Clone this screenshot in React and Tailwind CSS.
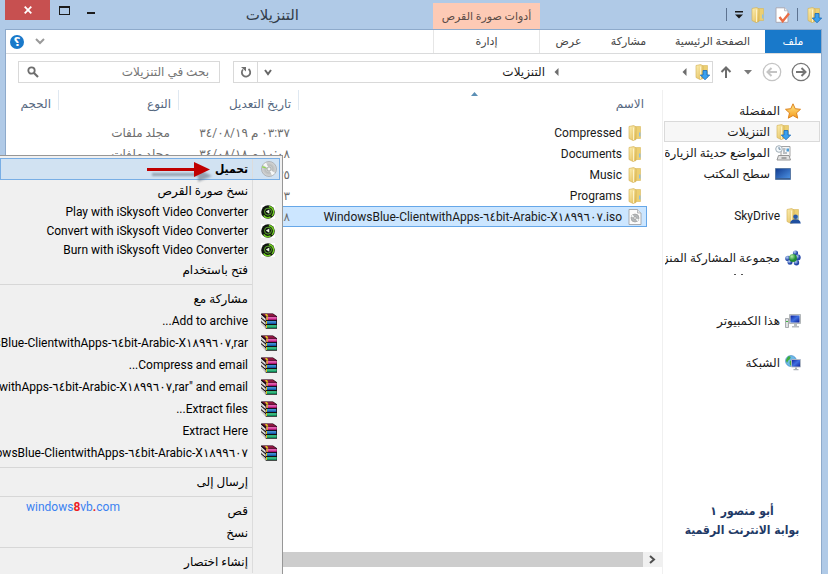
import React from "react";

function Defs() {
  return (
    <svg width="0" height="0" className="absolute" aria-hidden="true">
      <defs>
        <linearGradient id="fold" x1="0" x2="1" y1="0" y2="1">
          <stop offset="0" stopColor="#fdf0b4" />
          <stop offset="1" stopColor="#e0b953" />
        </linearGradient>
        <linearGradient id="screen" x1="0" x2="1" y1="0" y2="1">
          <stop offset="0" stopColor="#0c1f9c" />
          <stop offset="0.5" stopColor="#3f6fe0" />
          <stop offset="1" stopColor="#0a1c96" />
        </linearGradient>
        <linearGradient id="desk" x1="0" x2="1" y1="0" y2="1">
          <stop offset="0" stopColor="#123a8e" />
          <stop offset="1" stopColor="#4f97e8" />
        </linearGradient>
        <linearGradient id="star" x1="0" x2="0" y1="0" y2="1">
          <stop offset="0" stopColor="#ffe98a" />
          <stop offset="1" stopColor="#f59a1c" />
        </linearGradient>
        <radialGradient id="disc">
          <stop offset="0" stopColor="#ffffff" />
          <stop offset="0.5" stopColor="#b9bcbc" />
          <stop offset="1" stopColor="#d9dada" />
        </radialGradient>
        <radialGradient id="ball" cx="0.35" cy="0.3">
          <stop offset="0" stopColor="#b9d2f5" />
          <stop offset="1" stopColor="#2447a8" />
        </radialGradient>
        <radialGradient id="ballg" cx="0.35" cy="0.3">
          <stop offset="0" stopColor="#b8f0a8" />
          <stop offset="1" stopColor="#1f8c34" />
        </radialGradient>
        <filter id="soft" x="-10%" y="-30%" width="120%" height="160%">
          <feGaussianBlur stdDeviation="1.2" />
        </filter>
      </defs>
    </svg>
  );
}

function Svg({ size = 16, children }) {
  return (
    <svg width={size} height={size} viewBox="0 0 16 16" className="shrink-0" aria-hidden="true">
      {children}
    </svg>
  );
}

const folderShape = (
  <>
    <path d="M8.500 1.500h5v12h-5z" fill="#eccf72" stroke="#d9b85c" strokeWidth=".6" />
    <path d="M12 7.500h1.500v4H12z" fill="#8fc0e0" />
    <path d="M2 1.500 L6.800 .5 L9 2 V14.500 L6 15.500 L2 13.500z" fill="url(#fold)" stroke="#d2ac4c" strokeWidth=".6" />
    <path d="M6.600 2.500V15" stroke="#fff6cf" strokeWidth="1" />
  </>
);

const Folder = () => <Svg>{folderShape}</Svg>;

const Downloads = () => (
  <Svg>
    {folderShape}
    <path d="M9 6.500h4v4.500h2.700L11 15.800 6.300 11H9z" fill="#3aa0ee" stroke="#1668b8" strokeWidth=".8" />
  </Svg>
);

const SkyDriveIcon = () => (
  <Svg>
    {folderShape}
    <circle cx="10.500" cy="8.800" r="2.300" fill="#2a5aa8" />
    <path d="M5 15.500c.5-3 2.500-4.300 5.500-4.300s4.800 1.300 5.300 4.300z" fill="#1f4f9f" />
  </Svg>
);

const Star = () => (
  <Svg>
    <path d="M8 .8l2.200 4.900 5.300.6-4 3.600 1.200 5.300L8 12.500l-4.700 2.700 1.200-5.300-4-3.600 5.300-.6z" fill="url(#star)" stroke="#dd8420" strokeWidth="1" strokeLinejoin="round" />
  </Svg>
);

const Recent = () => (
  <Svg>
    <path d="M6 1.500h9v10H6z" fill="#f8f8f8" stroke="#9a9a9a" strokeWidth=".9" />
    <path d="M8 4h2.500M8 6h2M8 8h4" stroke="#6f7a85" strokeWidth=".9" />
    <path d="M11.500 3.500h2.500v3h-2.500z" fill="#4f9fd8" />
    <path d="M3.500 10.500h10.500l1.500 4.500H2z" fill="#e2e2e2" stroke="#8d8d8d" strokeWidth=".9" />
    <path d="M6.500 13h5" stroke="#666" />
    <circle cx="4" cy="4" r="3.300" fill="#f5fafd" stroke="#9aa6b0" strokeWidth=".9" />
    <path d="M4 2v2.200h1.700" fill="none" stroke="#4d6f8c" strokeWidth=".8" />
  </Svg>
);

const Desktop = () => (
  <Svg>
    <path d="M.5 2.500h15v11H.5z" fill="url(#desk)" stroke="#5b7ba6" />
    <path d="M1 12.500h14" stroke="#3a5f92" />
  </Svg>
);

const HomeGroup = () => (
  <Svg>
    <circle cx="10.500" cy="3" r="2.600" fill="url(#ball)" />
    <circle cx="3" cy="8.500" r="2.800" fill="url(#ball)" />
    <circle cx="12.800" cy="7.500" r="2.900" fill="url(#ball)" />
    <circle cx="5" cy="12.300" r="2.500" fill="url(#ball)" />
    <circle cx="11.500" cy="12.800" r="2.700" fill="url(#ball)" />
    <circle cx="8" cy="8" r="3.900" fill="url(#ballg)" />
  </Svg>
);

const Computer = () => (
  <Svg>
    <path d="M4.500 1.500h11v9h-11z" fill="#d9dcde" stroke="#a4a8ab" strokeWidth=".8" />
    <path d="M5.500 2.500h9v7h-9z" fill="url(#screen)" />
    <path d="M9 11h3v2H9zM7 13h7v1.500H7z" fill="#b8bcbf" />
    <path d="M.5 5.500h3v9h-3z" fill="#dfe2e4" stroke="#95999c" strokeWidth=".8" />
    <path d="M1 8.500h2" stroke="#3fb83f" />
  </Svg>
);

const Network = () => (
  <Svg>
    <circle cx="6" cy="6" r="5.500" fill="#6db8e8" stroke="#3a86c2" strokeWidth=".6" />
    <path d="M3 1.500c3-1 3 1 2 2.500S3 5 2.500 7 1 6 1 5zM5 6c2-1 4 0 4 2s-2 4-3 3-2-3-1-5z" fill="#3fae3c" />
    <path d="M6.500 4.500h9v7.500h-9z" fill="url(#screen)" stroke="#b5bcc4" strokeWidth=".9" />
    <path d="M10 12.500h2v1.500h-2zM8.500 14h5v1.200h-5z" fill="#aab0b6" />
  </Svg>
);

const DocCheck = () => (
  <Svg>
    <path d="M2 .8h8.500l3.500 3v11.500H2z" fill="#fff" stroke="#a9a9b4" />
    <path d="M10.500 .8v3H14" fill="#eee" stroke="#a9a9b4" strokeWidth=".7" />
    <path d="M5.500 10l3.200 4.200L15 6.500" fill="none" stroke="#ea6d45" strokeWidth="2.400" />
  </Svg>
);

const IsoFile = () => (
  <Svg>
    <path d="M2 .5h8.500l3.500 3.500v11.500H2z" fill="#fbfbfb" stroke="#a0a4a8" strokeWidth=".9" />
    <path d="M10.500 .5V4H14" fill="#e4e7ea" stroke="#a0a4a8" strokeWidth=".7" />
    <circle cx="8" cy="9" r="4" fill="#b4b8ba" stroke="#999" strokeWidth=".6" />
    <path d="M8 9L4 7.500 5.500 5.500zM8 9l4 1.500-1.500 2z" fill="#f3f5f5" />
    <circle cx="8" cy="9" r="1.300" fill="#fff" stroke="#888" strokeWidth=".6" />
  </Svg>
);

const Disc = () => (
  <Svg>
    <circle cx="8" cy="8" r="7.500" fill="url(#disc)" stroke="#9da1a3" strokeWidth=".7" />
    <path d="M8 8L2 4l3-2.500zM8 8l6 4-3 2.500z" fill="#f6f8f8" />
    <path d="M8 8L1 6.500 1.500 5z" fill="#8edc4a" />
    <circle cx="8" cy="8" r="2" fill="#eef0f0" stroke="#8f9395" strokeWidth=".7" />
  </Svg>
);

const SkySoft = () => (
  <Svg size={14}>
    <path d="M0 0h16v16H0z" fill="#fff" />
    <circle cx="8" cy="8" r="7.800" fill="#101510" />
    <path d="M9 1.800a6.300 6.300 0 0 1 3.500 10.700M3 12a6.300 6.300 0 0 0 8 1.600" fill="none" stroke="#72cf22" strokeWidth="1.700" />
    <circle cx="8" cy="7.600" r="4" fill="none" stroke="#5fae2e" strokeWidth="1.100" />
    <path d="M5.500 7.500L9.500 5v5z" fill="#e6f5dd" />
  </Svg>
);

const Books = () => (
  <Svg>
    <path d="M0 .5H12L16 3.300V15.700H5L0 11.300z" fill="#170c10" />
    <path d="M.8 .8H11.700L15.300 3.500H4.800z" fill="#8a1640" />
    <path d="M5 3.800H15.700V6.900H5z" fill="#c01880" />
    <path d="M5.500 4.900H15.700" stroke="#f78fd0" strokeWidth="1" />
    <path d="M5 7.900H15.300V11H5z" fill="#125cab" />
    <path d="M5.500 8.900H15" stroke="#6ab8f4" strokeWidth=".9" />
    <path d="M5 12H15.700V15.100H5z" fill="#0f8f5c" />
    <path d="M5.500 13H15.500" stroke="#6ae8a8" strokeWidth=".9" />
    <path d="M0 1.800l4.600 4v2.300L0 4.300zM0 5.500l4.600 4v2.300L0 8zM0 9.200l4.600 4v2.300L0 11.700z" fill="#fafafa" />
    <path d="M0 3.100l4.600 3.900M0 6.800l4.600 3.900M0 10.500l4.600 3.900" stroke="#8b8b8b" strokeWidth=".5" />
    <path d="M4 1h2l1.500 2.500h-2zM5.500 3.800h1.200v3.100H5.500zM5 7.900h1V11H5zM5 12h1v3.100H5z" fill="#d9c51e" />
  </Svg>
);

const Line = ({ w = 12, h = 12, d, color, sw = 2, fill = "none" }) => (
  <svg width={w} height={h} viewBox={`0 0 ${w} ${h}`} className="shrink-0" aria-hidden="true">
    <path d={d} fill={fill} stroke={fill === "none" ? color : "none"} strokeWidth={sw} />
  </svg>
);

const Circled = ({ color, back }) => (
  <svg width="20" height="20" viewBox="0 0 20 20" aria-hidden="true">
    <circle cx="10" cy="10" r="8.700" fill="none" stroke={color} strokeWidth="1.300" />
    <path d={back ? "M15 10H6M9.500 6L5.500 10l4 4" : "M5 10h9M10.500 6l4 4-4 4"} fill="none" stroke={color} strokeWidth="2" />
  </svg>
);

function TitleBar() {
  return (
    <header className="flex h-[29px] items-start">
      <div className="flex h-[29px] w-[104px] items-center justify-between pl-[8px]">
        <Downloads />
        <span className="h-[13px] w-px bg-[#5d7391]" />
        <button aria-label="خصائص"><DocCheck /></button>
        <button aria-label="مجلد جديد"><Folder /></button>
        <button aria-label="تخصيص">
          <Line w={8} h={9} d="M0 1h8v1.500H0zM0 4.500h8L4 8.500z" fill="#1a1a1a" />
        </button>
        <span className="h-[13px] w-px bg-[#5d7391]" />
      </div>
      <div className="min-w-0 flex-1 pr-[178px]">
        <div className="flex items-start">
          <div className="mt-[3px] flex h-[26px] w-[107px] shrink-0 items-center justify-center bg-[#fdcab5] pt-[2px] text-[11px] whitespace-nowrap text-[#5a4a46]">
            أدوات صورة القرص
          </div>
          <h1 className="flex-1 pr-[134px] text-[15px] leading-[30px] whitespace-nowrap text-[#333d4a]">التنزيلات</h1>
        </div>
      </div>
      <div className="flex items-start gap-[15px]">
        <button aria-label="تصغير" className="flex h-5 w-3 items-center justify-center pt-[5px]">
          <span className="h-[2px] w-2 bg-[#1c1c1c]" />
        </button>
        <button aria-label="تكبير" className="flex h-5 w-3 items-center justify-center">
          <span className="h-[9px] w-[11px] border border-t-2 border-[#1c1c1c]" />
        </button>
        <button aria-label="إغلاق" className="-mr-[7px] flex h-5 w-[45px] items-center justify-center bg-[#c75050]">
          <Line w={8} h={8} d="M.7 .7L7.300 7.300M7.300 .7L.7 7.300" color="#fff" sw={1.800} />
        </button>
      </div>
    </header>
  );
}

const tab = "flex h-full items-center justify-center whitespace-nowrap pt-[2px] text-[11px] text-[#444]";

function Ribbon() {
  return (
    <nav className="flex h-6 items-center border-b border-[#dadbdc]">
      <button className="h-full w-[56px] bg-[#1979ca] pt-[2px] text-[11px] text-white">ملف</button>
      <button className={`${tab} w-[105px]`}>الصفحة الرئيسية</button>
      <button className={`${tab} w-[63px]`}>مشاركة</button>
      <button className={`${tab} w-[57px]`}>عرض</button>
      <button className={`${tab} w-[107px] border-x border-[#e6e6e6]`}>إدارة</button>
      <div className="mr-auto flex items-center gap-[11px] pl-[4px]">
        <button aria-label="توسيع الشريط">
          <Line w={10} h={7} d="M1 1l4 4 4-4" color="#9a9a9a" />
        </button>
        <button aria-label="تعليمات" className="flex h-[14px] w-[14px] items-center justify-center rounded-full bg-[#1979ca] text-[12px] leading-none font-bold text-white">
          ؟
        </button>
      </div>
    </nav>
  );
}

function AddressRow() {
  return (
    <div className="flex h-9 items-center pr-[10px] pl-[12px]">
      <button aria-label="للخلف"><Circled color="#757575" /></button>
      <button aria-label="للأمام" className="mr-[9px]"><Circled color="#c4c4c4" back /></button>
      <button aria-label="المواقع الأخيرة" className="mr-[10px]">
        <Line w={8} h={5} d="M0 0h8L4 4.500z" fill="#7a7a7a" />
      </button>
      <button aria-label="للأعلى" className="mr-[12px]">
        <Line w={12} h={12} d="M6 12V1.500M1.500 6L6 1.500 10.500 6" color="#6d6d6d" />
      </button>
      <div className="mr-[7px] flex h-[22px] min-w-0 flex-1 items-center border border-[#d9d9d9] pr-[2px]">
        <Downloads />
        <span className="mr-[7px]"><Line w={5} h={8} d="M4.500 0v8L.5 4z" fill="#6d6d6d" /></span>
        <span className="mr-[123px]"><Line w={5} h={8} d="M4.500 0v8L.5 4z" fill="#6d6d6d" /></span>
        <span className="mr-[9px] flex-1 text-[12px] whitespace-nowrap text-[#1a1a1a]">التنزيلات</span>
        <button aria-label="السابق" className="flex h-full w-[20px] items-center justify-center">
          <Line w={8} h={7} d="M1 1l3 4 3-4" color="#666" />
        </button>
        <button aria-label="تحديث" className="flex h-full w-[24px] items-center justify-center border-r border-[#d9d9d9]">
          <svg width="12" height="12" viewBox="0 0 12 12" aria-hidden="true">
            <path d="M3 3.500a4.200 4.200 0 1 0 5.500-.5" fill="none" stroke="#707070" strokeWidth="1.800" />
            <path d="M1 1h5v4.500z" fill="#707070" />
          </svg>
        </button>
      </div>
      <label className="mr-[13px] flex h-[22px] w-[202px] items-center border border-[#d9d9d9] pr-[10px] pl-[8px]">
        <input
          type="text"
          aria-label="بحث في التنزيلات"
          placeholder="بحث في التنزيلات"
          className="min-w-0 flex-1 bg-transparent text-[12px] outline-none placeholder:text-[#757575]"
        />
        <svg width="12" height="12" viewBox="0 0 12 12" aria-hidden="true">
          <circle cx="4.500" cy="4.500" r="3.200" fill="none" stroke="#6d6d6d" strokeWidth="1.800" />
          <path d="M7 7l4 4" stroke="#6d6d6d" strokeWidth="2.200" />
        </svg>
      </label>
    </div>
  );
}

function NavItem({ icon, label, level, active }) {
  return (
    <li>
      <a
        href="#"
        className={`flex h-[21px] items-center gap-[5px] overflow-hidden border whitespace-nowrap ${
          active ? "border-[#dadada] bg-[#f7f7f7]" : "border-transparent"
        } ${level ? "pr-[28px]" : "pr-[18px]"}`}
      >
        {icon}
        <span>{label}</span>
      </a>
    </li>
  );
}

function NavPane() {
  return (
    <aside className="flex w-[159px] shrink-0 flex-col overflow-hidden border-l border-[#f0f0f0] pt-[10px] pr-px pl-px text-[12px] text-[#1a1a1a]">
      <ul>
        <NavItem icon={<Star />} label="المفضلة" />
        <NavItem icon={<Downloads />} label="التنزيلات" level active />
        <NavItem icon={<Recent />} label="المواضع حديثة الزيارة" level />
        <NavItem icon={<Desktop />} label="سطح المكتب" level />
      </ul>
      <ul className="mt-[21px] flex flex-col gap-[21px]">
        <NavItem icon={<SkyDriveIcon />} label="SkyDrive" />
        <NavItem icon={<HomeGroup />} label="مجموعة المشاركة المنزلية" />
      </ul>
      <div className="flex h-[42px] gap-[5px] pt-[6px] pr-[77px]">
        <span className="h-px w-[2px] bg-[#555]" />
        <span className="h-px w-[2px] bg-[#555]" />
      </div>
      <ul className="flex flex-col gap-[21px]">
        <NavItem icon={<Computer />} label="هذا الكمبيوتر" />
        <NavItem icon={<Network />} label="الشبكة" />
      </ul>
      <p className="mt-auto pb-[34px] text-center font-['DejaVu_Sans_Condensed','DejaVu_Sans',sans-serif] text-[12px] leading-[19px] font-bold whitespace-nowrap text-[#1f3a66]">
        أبو منصور ١<br />بوابة الانترنت الرقمية
      </p>
    </aside>
  );
}

const iso = "WindowsBlue-ClientwithApps-٦٤bit-Arabic-X١٨٩٩٦٠٧";

const files = [
  { name: "Compressed", date: "٠٣:٣٧ م ٣٤/٠٨/١٩", type: "مجلد ملفات" },
  { name: "Documents", date: "١٠:٠٨ م ٣٤/٠٨/١٨", type: "مجلد ملفات" },
  { name: "Music", date: "٠٣:٣٥ م ٣٤/٠٨/١٩", type: "مجلد ملفات" },
  { name: "Programs", date: "٠٢:١٣ م ٣٤/٠٨/١٩", type: "مجلد ملفات" },
  { name: `${iso}.iso`, date: "٠٢:٠٨ م ٣٤/٠٨/١٩", type: "ملف صورة القرص", active: true },
];

const columns = [
  { label: "الاسم", style: "pr-[3px] border-l" },
  { label: "تاريخ التعديل", style: "pr-[7px] border-l" },
  { label: "النوع", style: "pr-[7px] border-l" },
  { label: "الحجم", style: "pr-[7px]" },
];

function FileList() {
  return (
    <main className="flex min-w-0 flex-1 flex-col">
      <div className="relative pr-[15px]">
        <span className="absolute top-[2px] right-[184px]">
          <Line w={7} h={4} d="M0 4L3.500 0 7 4z" fill="#5b8fb5" />
        </span>
        <table className="w-full table-fixed border-collapse text-[12px] whitespace-nowrap">
          <colgroup>
            <col />
            <col className="w-[120px]" />
            <col className="w-[120px]" />
            <col className="w-[52px]" />
          </colgroup>
          <thead>
            <tr className="h-[32px] text-[#56687f]">
              {columns.map((c) => (
                <th key={c.label} className="p-0 font-normal">
                  <div className={`mb-[12px] h-[20px] border-[#dfe8f1] pt-[5px] text-right ${c.style}`}>{c.label}</div>
                </th>
              ))}
            </tr>
          </thead>
          <tbody>
            {files.map((f) => (
              <tr key={f.name} className={`h-[21px] ${f.active ? "bg-[#cce6ff] outline outline-[#66a7e8] -outline-offset-1" : ""}`}>
                <td className="p-0">
                  <div className="flex items-center gap-[5px] pr-[4px] text-[#1a1a1a]">
                    {f.active ? <IsoFile /> : <Folder />}
                    <span dir="ltr">{f.name}</span>
                  </div>
                </td>
                <td className="p-0 pr-[8px] text-[#6d6d6d]">{f.date}</td>
                <td className="p-0 pr-[8px] text-[#6d6d6d]">{f.type}</td>
                <td className="p-0" />
              </tr>
            ))}
          </tbody>
        </table>
      </div>
      <div className="mt-auto mb-[7px] flex h-[15px] bg-[#f0f0f0]">
        <button aria-label="تمرير" className="flex w-[19px] items-center justify-center">
          <Line w={7} h={9} d="M1 1l4 3.500L1 8" color="#505050" />
        </button>
        <div className="flex-1 bg-[#cdcdcd]" />
      </div>
    </main>
  );
}

const menu = [
  { label: "تحميل", icon: <Disc />, active: true },
  { label: "نسخ صورة القرص" },
  { label: "Play with iSkysoft Video Converter", icon: <SkySoft />, small: true },
  { label: "Convert with iSkysoft Video Converter", icon: <SkySoft />, small: true },
  { label: "Burn with iSkysoft Video Converter", icon: <SkySoft />, small: true },
  { label: "فتح باستخدام" },
  null,
  { label: "مشاركة مع" },
  { label: "Add to archive...", icon: <Books /> },
  { label: `Add to "${iso},rar`, icon: <Books />, ltr: true },
  { label: "Compress and email...", icon: <Books /> },
  { label: `Compress to "${iso},rar" and email`, icon: <Books />, ltr: true },
  { label: "Extract files...", icon: <Books /> },
  { label: "Extract Here", icon: <Books /> },
  { label: `Extract to ${iso}`, icon: <Books />, ltr: true },
  null,
  { label: "إرسال إلى" },
  null,
  { label: "قص" },
  { label: "نسخ" },
  null,
  { label: "إنشاء اختصار" },
];

function MenuRow({ item }) {
  if (!item) {
    return (
      <li role="separator" className="flex h-[7px] items-center">
        <span className="w-[28px] self-stretch border-l border-[#dcdcdc]" />
        <span className="h-px flex-1 bg-[#d7d7d7]" />
      </li>
    );
  }
  return (
    <li>
      <button
        className={`flex w-full items-center text-right whitespace-nowrap ${item.small ? "h-[19px]" : "h-[22px]"} ${
          item.active
            ? "bg-[#d1e2f2] font-['DejaVu_Sans_Condensed','DejaVu_Sans',sans-serif] font-bold outline outline-[#78aee5] -outline-offset-1"
            : ""
        }`}
      >
        <span className="flex w-[28px] shrink-0 items-center self-stretch border-l border-[#dcdcdc] pr-[3px]">
          <span className="flex w-4 justify-end">{item.icon}</span>
        </span>
        <span dir={item.ltr ? "ltr" : "rtl"} className="pr-[4px]">{item.label}</span>
      </button>
    </li>
  );
}

function ContextMenu() {
  return (
    <div className="absolute top-[155px] bottom-0 left-0 w-[283px] overflow-hidden border-t border-r border-[#979797] bg-[#f0f0f0] pt-[2px] pr-[2px] text-[12px] text-black">
      <ul>
        {menu.map((item, i) => (
          <MenuRow key={i} item={item} />
        ))}
      </ul>
      <svg width="70" height="24" viewBox="0 0 70 24" className="absolute top-[4px] left-[146px]" aria-hidden="true">
        <path d="M6 13h46V9l14 7-14 6v-6H6z" fill="#6c7888" opacity=".6" filter="url(#soft)" />
        <path d="M1 8h47V2l16 7.500L48 17v-6H1z" fill="#c00000" />
      </svg>
      <p dir="ltr" className="absolute top-[341px] left-[26px] text-[12px] leading-[20px] text-[#3b82f0]">
        windows<span className="font-bold text-[#ee1c24]">8</span>vb<span className="font-bold text-[#ee1c24]">.</span>com
      </p>
    </div>
  );
}

export default function App() {
  return (
    <div dir="rtl" lang="ar" className="relative flex min-h-screen flex-col overflow-hidden bg-[#b0cae7] pr-[6px] pl-[5px] font-['Roboto','DejaVu_Sans',sans-serif]">
      <Defs />
      <TitleBar />
      <div className="flex flex-1 flex-col border border-b-0 border-[#8eaacb] bg-white">
        <Ribbon />
        <AddressRow />
        <div className="flex flex-1">
          <NavPane />
          <FileList />
        </div>
      </div>
      <ContextMenu />
    </div>
  );
}
